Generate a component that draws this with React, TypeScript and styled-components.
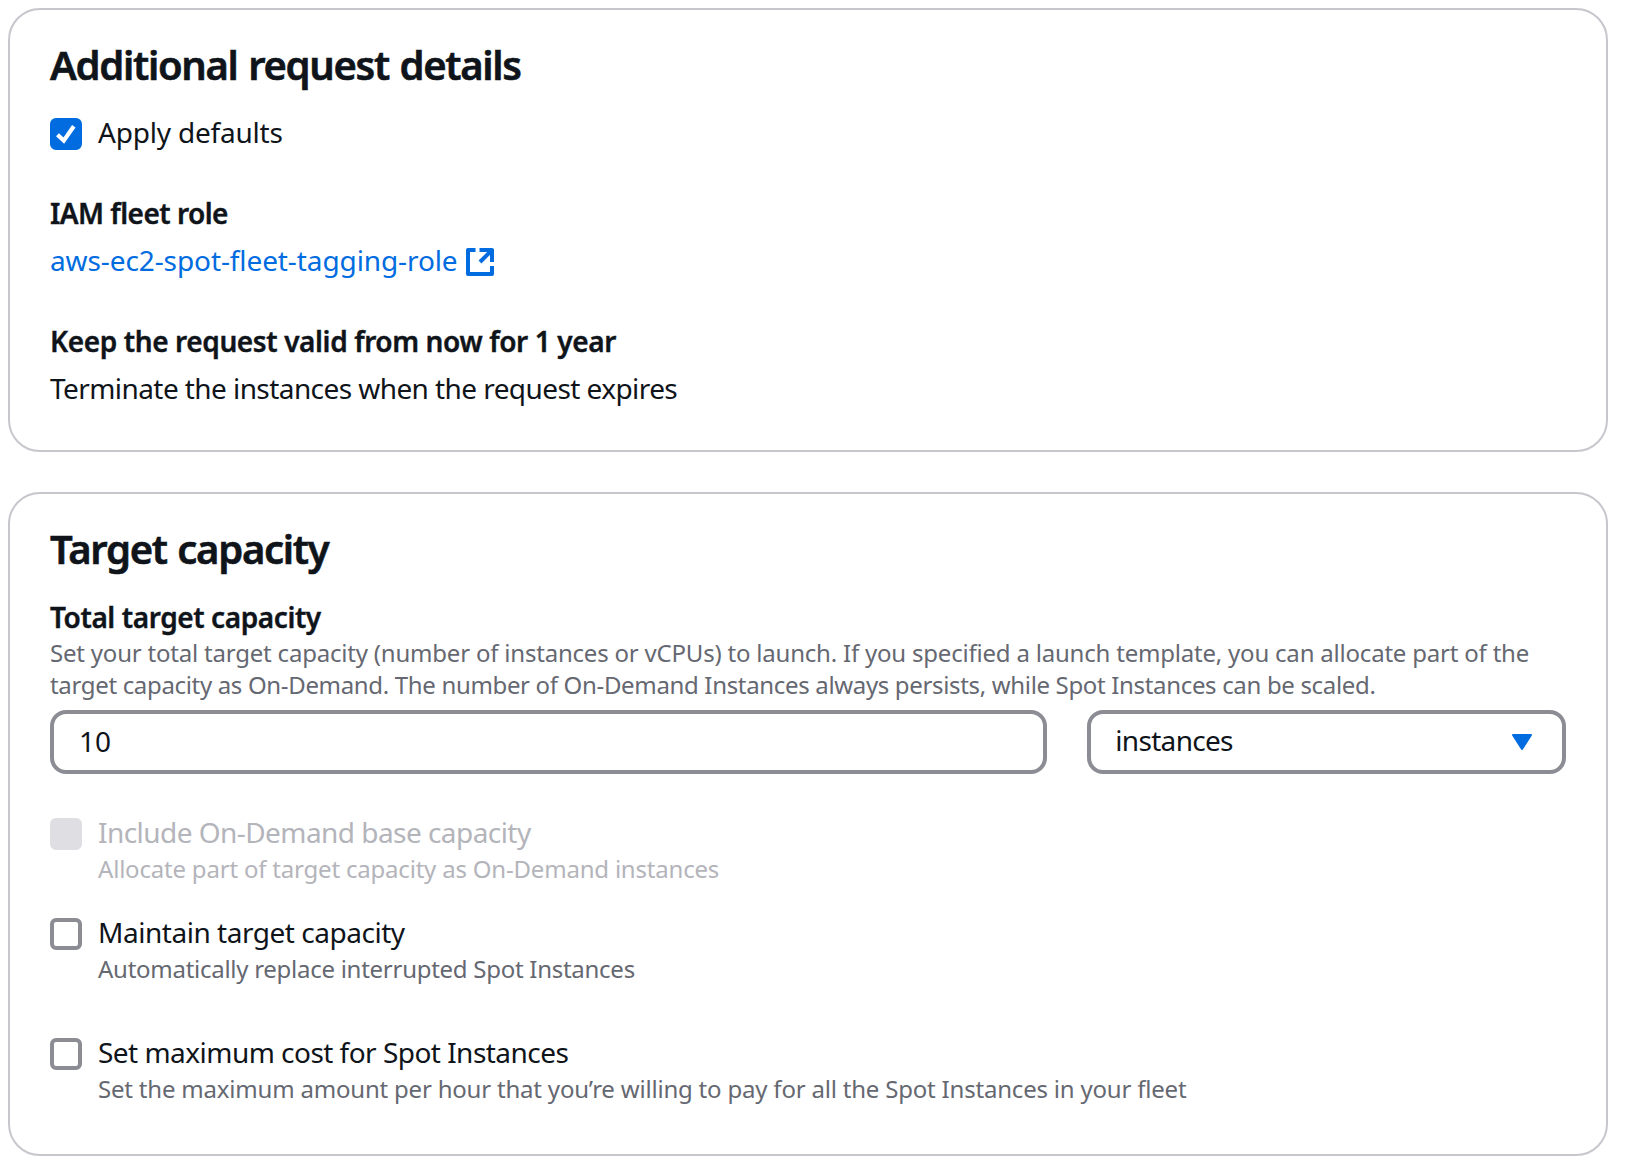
import React, { useState } from "react";
import styled, { createGlobalStyle } from "styled-components";

const GlobalStyle = createGlobalStyle`
  * { box-sizing: border-box; }
  body {
    margin: 0;
    background: #fff;
    color: #0f141a;
    font-family: "Noto Sans", "Open Sans", sans-serif;
    font-size: 28px;
    line-height: 40px;
  }
`;

const Page = styled.main`
  display: flex;
  flex-direction: column;
  gap: 40px;
  width: 1616px;
  padding: 8px;
`;

const Card = styled.section<{ $bottom: number }>`
  display: flex;
  flex-direction: column;
  gap: 24px;
  padding: 32px 40px ${(p) => p.$bottom}px;
  border: 2px solid #c6c6cd;
  border-radius: 32px;
`;

const Title = styled.h2`
  margin: -1px 0 1px;
  font-size: 40px;
  line-height: 48px;
  font-weight: 600;
  letter-spacing: -1.32px;
  word-spacing: 1.6px;
  -webkit-text-stroke: 0.6px currentColor;
  white-space: nowrap;
`;

const Stack = styled.div<{ $gap: number }>`
  display: flex;
  flex-direction: column;
  align-items: stretch;
  gap: ${(p) => p.$gap}px;
`;

const Text = styled.span<{ $bold?: boolean; $track?: number }>`
  display: block;
  margin: ${(p) => (p.$bold ? "-1px 0 1px" : "-2px 0 2px")};
  font-weight: ${(p) => (p.$bold ? 600 : 400)};
  -webkit-text-stroke: ${(p) => (p.$bold ? "0.4px" : "0")} currentColor;
  letter-spacing: ${(p) => p.$track ?? 0}px;
  white-space: nowrap;
`;

const Description = styled.span<{ $disabled?: boolean; $track?: number }>`
  display: block;
  margin: -1px 0 1px;
  font-size: 24px;
  line-height: 32px;
  letter-spacing: ${(p) => p.$track ?? 0}px;
  color: ${(p) => (p.$disabled ? "#b4b4bb" : "#656871")};
  white-space: nowrap;
`;

const Link = styled.a`
  display: flex;
  align-items: center;
  gap: 8px;
  color: #006ce0;
  text-decoration: none;
`;

const Option = styled.label`
  display: flex;
  align-items: flex-start;
  gap: 16px;
`;

const Box = styled.span<{ $state: "on" | "off" | "disabled" }>`
  flex: none;
  display: flex;
  width: 32px;
  height: 32px;
  margin-top: 4px;
  border-radius: 6px;
  border: 4px solid
    ${(p) => ({ on: "#006ce0", off: "#8c8c94", disabled: "#dedee3" })[p.$state]};
  background: ${(p) => ({ on: "#006ce0", off: "#fff", disabled: "#dedee3" })[p.$state]};
`;

const OptionLabel = styled(Text)<{ $disabled?: boolean }>`
  color: ${(p) => (p.$disabled ? "#b4b4bb" : "#0f141a")};
`;

const FieldRow = styled.div`
  display: grid;
  grid-template-columns: minmax(0, 997.33px) minmax(0, 1fr);
  gap: 40px;
  padding: 8px 0 40px;
`;

const Input = styled.input`
  width: 100%;
  height: 64px;
  padding: 0 25px 2px;
  border: 4px solid #8c8c94;
  border-radius: 16px;
  font: inherit;
  color: inherit;
  outline: none;
`;

const Select = styled.button`
  display: flex;
  align-items: center;
  justify-content: space-between;
  height: 64px;
  padding: 0 30px 0 24px;
  border: 4px solid #8c8c94;
  border-radius: 16px;
  background: #fff;
  font: inherit;
  color: inherit;
`;

function Checkbox(props: {
  label: string;
  track?: number;
  description?: string;
  descriptionTrack?: number;
  checked?: boolean;
  disabled?: boolean;
}) {
  const state = props.disabled ? "disabled" : props.checked ? "on" : "off";
  return (
    <Option>
      <Box $state={state}>
        {props.checked && (
          <svg width="24" height="24" viewBox="0 0 24 24" fill="none">
            <path d="M3.5 12.8 L9.8 18.6 L19.8 4.3" stroke="#fff" strokeWidth="4.2" />
          </svg>
        )}
      </Box>
      <div>
        <OptionLabel $disabled={props.disabled} $track={props.track}>
          {props.label}
        </OptionLabel>
        {props.description && (
          <Description $disabled={props.disabled} $track={props.descriptionTrack}>
            {props.description}
          </Description>
        )}
      </div>
    </Option>
  );
}

const ExternalIcon = () => (
  <svg
    width="28"
    height="28"
    viewBox="0 0 28 28"
    fill="none"
    stroke="#006ce0"
    strokeWidth="4"
    strokeLinejoin="round"
  >
    <path d="M9.5 2H2V26H26V18" />
    <path d="M13.5 2H26V14M26 2L14 14" />
  </svg>
);

const CaretIcon = () => (
  <svg width="20" height="16" viewBox="0 0 20 16">
    <path d="M1 1H19L10 15Z" fill="#006ce0" stroke="#006ce0" strokeWidth="2" strokeLinejoin="round" />
  </svg>
);

export default function App() {
  const [capacity, setCapacity] = useState("10");
  return (
    <>
      <GlobalStyle />
      <Page>
        <Card $bottom={40}>
          <Title>Additional request details</Title>
          <Stack $gap={40}>
            <Checkbox label="Apply defaults" track={-0.2} checked />
            <Stack $gap={8}>
              <Text $bold $track={-0.53}>IAM fleet role</Text>
              <Link href="#">
                <Text $track={-0.1}>aws-ec2-spot-fleet-tagging-role</Text>
                <ExternalIcon />
              </Link>
            </Stack>
            <Stack $gap={8}>
              <Text $bold $track={-0.39}>Keep the request valid from now for 1 year</Text>
              <Text $track={-0.575}>Terminate the instances when the request expires</Text>
            </Stack>
          </Stack>
        </Card>
        <Card $bottom={48}>
          <Title>Target capacity</Title>
          <div>
            <Text $bold $track={-0.41}>Total target capacity</Text>
            <Description $track={-0.206}>
              Set your total target capacity (number of instances or vCPUs) to launch. If you
              specified a launch template, you can allocate part of the
            </Description>
            <Description $track={-0.334}>
              target capacity as On-Demand. The number of On-Demand Instances always persists, while
              Spot Instances can be scaled.
            </Description>
            <FieldRow>
              <Input value={capacity} onChange={(e) => setCapacity(e.target.value)} />
              <Select>
                <Text $track={-0.69}>instances</Text>
                <CaretIcon />
              </Select>
            </FieldRow>
            <Stack $gap={48}>
              <Stack $gap={28}>
                <Checkbox
                  disabled
                  label="Include On-Demand base capacity"
                  track={-0.55}
                  description="Allocate part of target capacity as On-Demand instances"
                  descriptionTrack={-0.2}
                />
                <Checkbox
                  label="Maintain target capacity"
                  track={-0.47}
                  description="Automatically replace interrupted Spot Instances"
                  descriptionTrack={-0.27}
                />
              </Stack>
              <Checkbox
                label="Set maximum cost for Spot Instances"
                track={-0.53}
                description="Set the maximum amount per hour that you’re willing to pay for all the Spot Instances in your fleet"
                descriptionTrack={-0.2}
              />
            </Stack>
          </div>
        </Card>
      </Page>
    </>
  );
}
